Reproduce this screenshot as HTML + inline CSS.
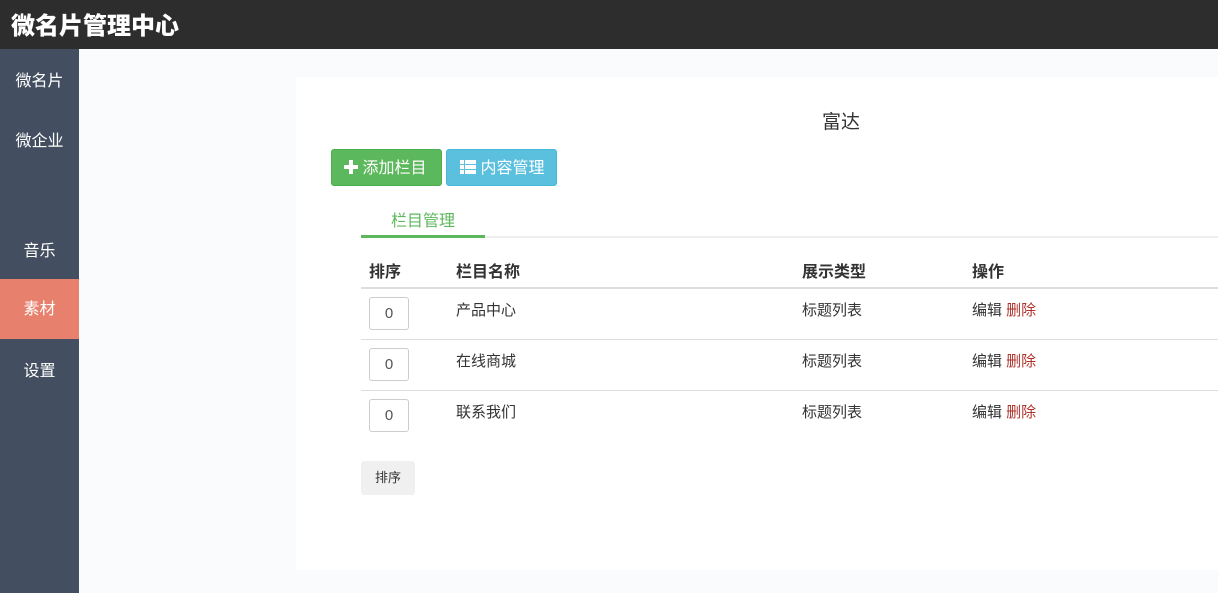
<!DOCTYPE html>
<html><head><meta charset="utf-8"><style>
*{margin:0;padding:0;box-sizing:border-box}
body{width:1218px;height:593px;overflow:hidden;background:#fafbfc;font-family:"Liberation Sans","Noto Sans CJK SC",sans-serif;color:#333;position:relative}
.a{position:absolute;white-space:nowrap}
.hd{left:0;top:0;width:1218px;height:49px;background:#2d2d2d}
.hd span{position:absolute;left:11px;top:6px;font-size:24px;font-weight:900;color:#fff;letter-spacing:0}
.sb{left:0;top:49px;width:79px;height:544px;background:#434f60}
.nav{left:0;width:79px;height:60px;line-height:66px;text-align:center;color:#fff;font-size:16px}
.panel{left:296px;top:77px;width:922px;height:493px;background:#fff}
.btn{height:37px;line-height:37px;border-radius:3px;color:#fff;font-size:16px}
.th{font-size:16px;font-weight:bold;color:#333;top:258px}
.line{left:361px;width:857px;height:1px;background:#ddd}
.inp{left:369px;width:40px;height:33px;border:1px solid #ccc;border-radius:3px;text-align:center;line-height:31px;font-size:15px;color:#555}
.td{font-size:15px;color:#333}
.red{color:#b0312b}
</style></head><body>
<div class="a hd"><span>微名片管理中心</span></div>
<div class="a sb"></div>
<div class="a nav" style="top:49px">微名片</div>
<div class="a nav" style="top:109px">微企业</div>
<div class="a nav" style="top:219px">音乐</div>
<div class="a nav" style="top:279px;background:#e8806e;line-height:62px">素材</div>
<div class="a nav" style="top:339px">设置</div>
<div class="a panel"></div>
<div class="a" style="left:822px;top:107px;font-size:19px">富达</div>
<div class="a btn" style="left:331px;top:149px;width:111px;background:#5cb85c;border:1px solid #4cae4c;padding-left:12px"><svg width="14" height="14" viewBox="0 0 14 14" style="vertical-align:-1px"><path d="M5 0h4v5h5v4H9v5H5V9H0V5h5z" fill="#fff"/></svg> 添加栏目</div>
<div class="a btn" style="left:446px;top:149px;width:111px;background:#5bc0de;border:1px solid #46b8da;padding-left:13px"><svg width="16" height="14" viewBox="0 0 16 14" style="vertical-align:-1px" fill="#fff"><rect x="0" y="0" width="4" height="4"/><rect x="5" y="0" width="11" height="4"/><rect x="0" y="5" width="4" height="4"/><rect x="5" y="5" width="11" height="4"/><rect x="0" y="10" width="4" height="4"/><rect x="5" y="10" width="11" height="4"/></svg> 内容管理</div>
<div class="a" style="left:391px;top:207px;font-size:16px;color:#5cb85c">栏目管理</div>
<div class="a" style="left:361px;top:236px;width:857px;height:2px;background:#eee"></div>
<div class="a" style="left:361px;top:235px;width:124px;height:3px;background:#5cb85c"></div>
<div class="a th" style="left:369px">排序</div>
<div class="a th" style="left:456px">栏目名称</div>
<div class="a th" style="left:802px">展示类型</div>
<div class="a th" style="left:972px">操作</div>
<div class="a line" style="top:287px;height:2px"></div>
<div class="a inp" style="top:297px">0</div>
<div class="a td" style="left:456px;top:299px">产品中心</div>
<div class="a td" style="left:802px;top:299px">标题列表</div>
<div class="a td" style="left:972px;top:299px">编辑 <span class="red">删除</span></div>
<div class="a line" style="top:339px"></div>
<div class="a inp" style="top:348px">0</div>
<div class="a td" style="left:456px;top:350px">在线商城</div>
<div class="a td" style="left:802px;top:350px">标题列表</div>
<div class="a td" style="left:972px;top:350px">编辑 <span class="red">删除</span></div>
<div class="a line" style="top:390px"></div>
<div class="a inp" style="top:399px">0</div>
<div class="a td" style="left:456px;top:401px">联系我们</div>
<div class="a td" style="left:802px;top:401px">标题列表</div>
<div class="a td" style="left:972px;top:401px">编辑 <span class="red">删除</span></div>
<div class="a" style="left:361px;top:461px;width:54px;height:34px;background:#f0f0f0;border-radius:3px;text-align:center;line-height:34px;font-size:13px">排序</div>
</body></html>
